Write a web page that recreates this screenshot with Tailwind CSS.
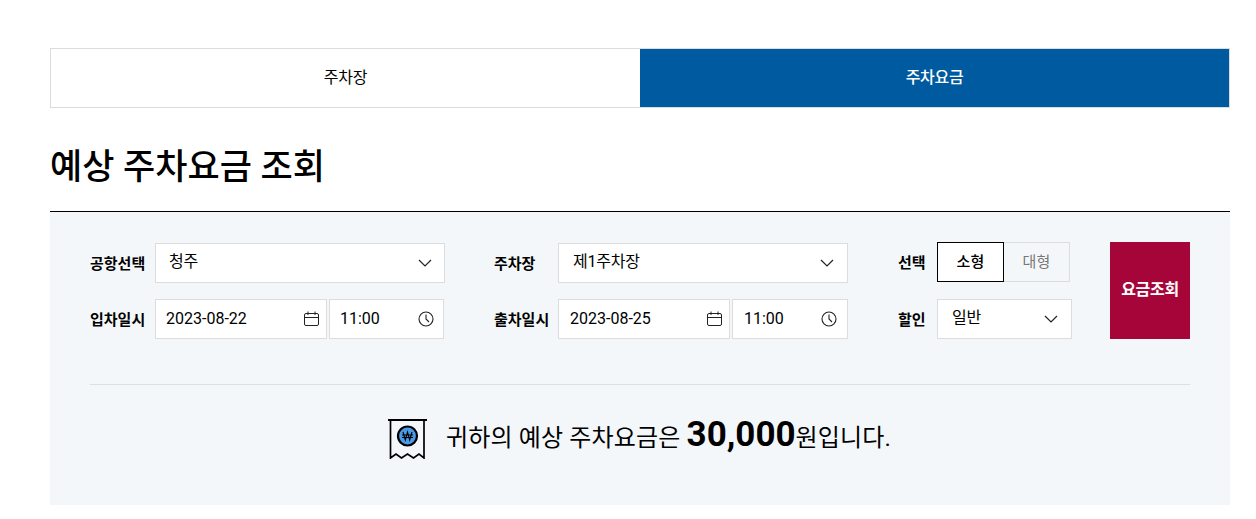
<!DOCTYPE html>
<html lang="ko">
  <head>
    <meta charset="utf-8">
    <title>예상 주차요금 조회</title>
    <script src="https://cdn.jsdelivr.net/npm/@tailwindcss/browser@4"></script>
  </head>
  <body class="bg-white font-['Roboto','Noto_Sans_CJK_KR',sans-serif] text-black overflow-hidden">
    <div class="w-[1180px] ml-[50px] pt-[48px]">
      <!-- tabs -->
      <div class="flex h-[60px] text-[16px] border border-[#dcdcdc]">
        <a class="w-[589px] flex items-center justify-center font-normal tracking-[-0.3px]">주차장</a>
        <a class="w-[589px] flex items-center justify-center bg-[#005a9f] text-white font-medium tracking-[-0.3px]">주차요금</a>
      </div>

      <h1 class="h-[104px] pt-[36px] text-[35px] leading-[48px] font-medium border-b border-black">예상 주차요금 조회</h1>

      <div class="bg-[#f4f7fa] h-[293px] px-[40px] pt-[30px]">
        <div class="flex h-[97px] text-[16px]">
          <!-- col 1 -->
          <div class="w-[404px] flex flex-col gap-[16px] pt-px">
            <div class="flex items-center h-[40px]">
              <label class="w-[65px] pt-[2px] text-[15px] font-bold">공항선택</label>
              <div class="w-[290px] h-[40px] bg-white border border-[#dcdcdc] flex items-center justify-between pl-[13px] pr-[12px]">
                <span class="pb-[3px] tracking-[-0.2px]">청주</span>
                <svg width="14" height="8" viewBox="0 0 14 8" fill="none" stroke="#222" stroke-width="1.2"><path d="M1 1l6 6 6-6"/></svg>
              </div>
            </div>
            <div class="flex items-center h-[40px]">
              <label class="w-[65px] pt-[2px] text-[15px] font-bold">입차일시</label>
              <div class="w-[172px] h-[40px] bg-white border border-[#dcdcdc] flex items-center justify-between pl-[10px] pr-[6px]">
                <span class="pb-[1px]">2023-08-22</span>
                <svg width="16" height="16" viewBox="0 0 16 16" fill="none" stroke="#222" stroke-width="1"><rect x="0.5" y="2.5" width="14" height="12" rx="1.5"/><path d="M0.5 6.5h14M4 0.5v3.5M11 0.5v3.5"/></svg>
              </div>
              <div class="w-[115px] h-[40px] ml-[2px] bg-white border border-[#dcdcdc] flex items-center justify-between pl-[10px] pr-[9px]">
                <span class="pb-[1px]">11:00</span>
                <svg width="16" height="16" viewBox="0 0 16 16" fill="none" stroke="#222" stroke-width="1.1" class="mb-[1px]"><circle cx="8" cy="8" r="7"/><path d="M8 3.5V8l3 3"/></svg>
              </div>
            </div>
          </div>
          <!-- col 2 -->
          <div class="w-[404px] flex flex-col gap-[16px] pt-px">
            <div class="flex items-center h-[40px]">
              <label class="w-[64px] pt-[2px] text-[15px] font-bold">주차장</label>
              <div class="w-[290px] h-[40px] bg-white border border-[#dcdcdc] flex items-center justify-between pl-[14px] pr-[13px]">
                <span class="pb-[3px] tracking-[-0.2px]">제1주차장</span>
                <svg width="14" height="8" viewBox="0 0 14 8" fill="none" stroke="#222" stroke-width="1.2"><path d="M1 1l6 6 6-6"/></svg>
              </div>
            </div>
            <div class="flex items-center h-[40px]">
              <label class="w-[64px] pt-[2px] text-[15px] font-bold">출차일시</label>
              <div class="w-[172px] h-[40px] bg-white border border-[#dcdcdc] flex items-center justify-between pl-[11px] pr-[6px]">
                <span class="pb-[1px]">2023-08-25</span>
                <svg width="16" height="16" viewBox="0 0 16 16" fill="none" stroke="#222" stroke-width="1"><rect x="0.5" y="2.5" width="14" height="12" rx="1.5"/><path d="M0.5 6.5h14M4 0.5v3.5M11 0.5v3.5"/></svg>
              </div>
              <div class="w-[116px] h-[40px] ml-[2px] bg-white border border-[#dcdcdc] flex items-center justify-between pl-[11px] pr-[10px]">
                <span class="pb-[1px]">11:00</span>
                <svg width="16" height="16" viewBox="0 0 16 16" fill="none" stroke="#222" stroke-width="1.1" class="mb-[1px]"><circle cx="8" cy="8" r="7"/><path d="M8 3.5V8l3 3"/></svg>
              </div>
            </div>
          </div>
          <!-- col 3 -->
          <div class="w-[212px] flex flex-col gap-[17px]">
            <div class="flex items-center h-[40px]">
              <label class="w-[39px] pt-[2px] text-[15px] font-bold">선택</label>
              <div class="flex h-[40px] text-[15px]">
                <button class="w-[67px] bg-white border border-black font-medium tracking-[0.2px]">소형</button>
                <button class="w-[66px] border border-l-0 border-[#dcdcdc] text-[#777] tracking-[0.2px]">대형</button>
              </div>
            </div>
            <div class="flex items-center h-[40px]">
              <label class="w-[39px] pt-[2px] text-[15px] font-bold">할인</label>
              <div class="w-[135px] h-[40px] bg-white border border-[#dcdcdc] flex items-center justify-between pl-[14px] pr-[13px]">
                <span class="pb-[3px] tracking-[-0.2px]">일반</span>
                <svg width="14" height="8" viewBox="0 0 14 8" fill="none" stroke="#222" stroke-width="1.2"><path d="M1 1l6 6 6-6"/></svg>
              </div>
            </div>
          </div>
          <button class="w-[80px] h-[97px] pb-[2px] bg-[#a6053a] text-white text-[16px] tracking-[-0.3px] font-bold">요금조회</button>
        </div>

        <div class="h-px bg-[#dcdfe3] mt-[45px]"></div>

        <!-- result -->
        <div class="flex items-center justify-center h-[103px]">
          <svg class="mr-[19px] mt-[4px]" width="39" height="40" viewBox="0 0 39 40" fill="none" stroke="#000">
            <path d="M0 1h39" stroke-width="2"/>
            <path d="M2.500 1v38l5.500-4 5.500 4 6-4 6 4 5.500-4 5 4V1" stroke-width="1.700"/>
            <circle cx="19.500" cy="17" r="9.500" fill="#4a9ae6" stroke-width="2.200"/>
            <path d="M15 13l2.300 8 2.200-8 2.200 8 2.300-8M14 16h11M14 18.500h11" stroke-width="1.100"/>
          </svg>
          <p class="text-[24px] tracking-[0.15px] leading-[40px] flex items-baseline mr-[1px]">귀하의 예상 주차요금은&nbsp;<strong class="text-[35px] tracking-normal font-bold">30,000</strong>원입니다.</p>
        </div>
      </div>
    </div>
  </body>
</html>
